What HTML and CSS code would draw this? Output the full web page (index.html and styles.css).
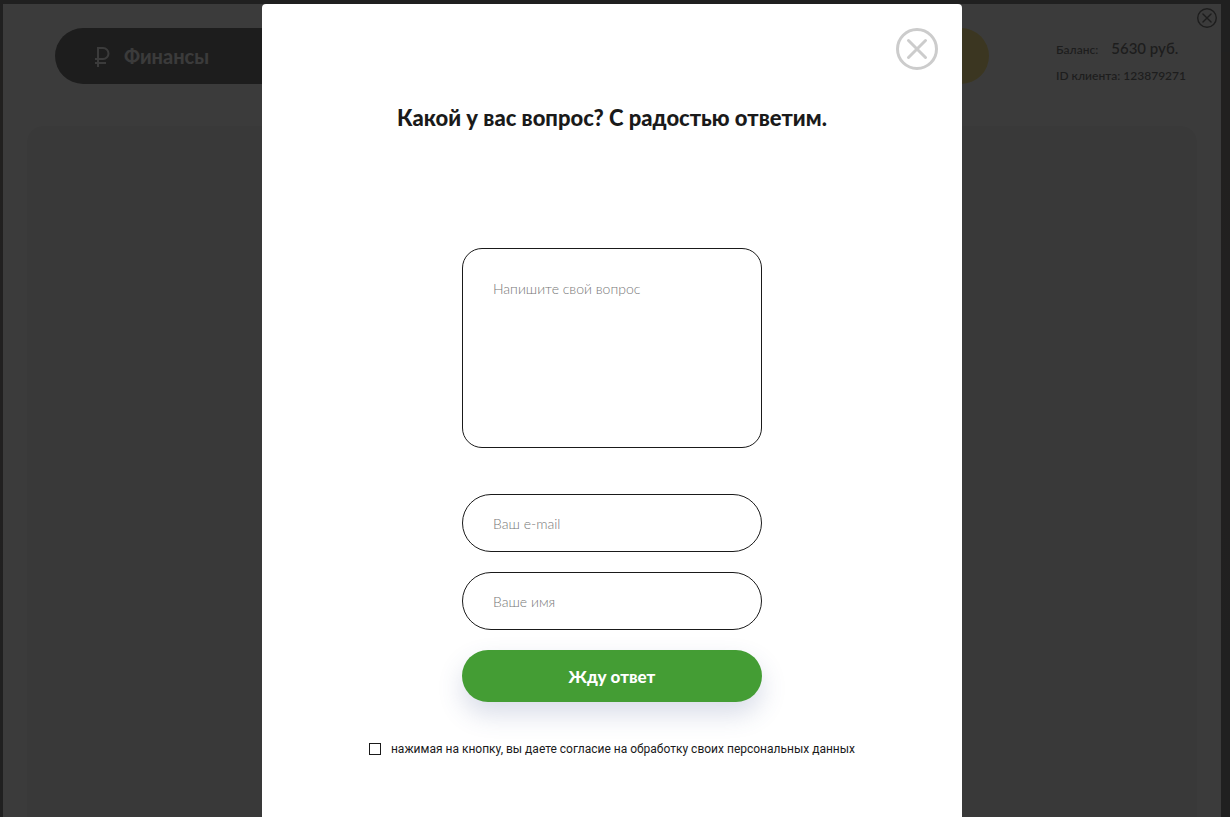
FILE: index.html
```html
<!DOCTYPE html>
<html lang="ru">

<head>
  <meta charset="UTF-8" />
  <meta name="viewport" content="width=device-width, initial-scale=1.0" />
  <title>Финансы</title>
  <link rel="stylesheet" href="styles.css">
</head>

<body>
  <div class="cabinet">
    <header class="header">
      <nav class="menu">
        <a href="#" class="menu-item">
          <svg class="rub" viewBox="0 0 16 22" aria-hidden="true">
            <path d="M4 22V3h5a5 5 0 0 1 0 11H1M1 18H12" />
          </svg>
          Финансы
        </a>
        <a href="#" class="menu-item menu-item-yellow" aria-label="Пополнить"></a>
      </nav>
      <div class="client">
        <p>Баланс: <span class="sum">5630 руб.</span></p>
        <p>ID клиента: 123879271</p>
      </div>
      <button type="button" class="close close-small" aria-label="Закрыть кабинет">
        <svg viewBox="0 0 42 42">
          <circle cx="21" cy="21" r="19.5" />
          <path d="M12.5 12.5l17 17M29.5 12.5l-17 17" />
        </svg>
      </button>
    </header>
    <main class="panel"></main>
  </div>

  <div class="overlay">
    <div class="modal" role="dialog" aria-labelledby="modalTitle">
      <button type="button" class="close close-modal" aria-label="Закрыть">
        <svg viewBox="0 0 42 42">
          <circle cx="21" cy="21" r="19.5" />
          <path d="M12.5 12.5l17 17M29.5 12.5l-17 17" />
        </svg>
      </button>
      <h2 id="modalTitle">Какой у вас вопрос? С радостью ответим.</h2>
      <form class="question-form">
        <textarea class="field field-question" placeholder="Напишите свой вопрос" aria-label="Напишите свой вопрос"></textarea>
        <input class="field" type="email" placeholder="Ваш e-mail" aria-label="Ваш e-mail" />
        <input class="field" type="text" placeholder="Ваше имя" aria-label="Ваше имя" />
        <button type="submit" class="submit">Жду ответ</button>
        <div class="agree">
          <input type="checkbox" id="agree" />
          <label for="agree">нажимая на кнопку, вы даете согласие на обработку своих персональных данных</label>
        </div>
      </form>
    </div>
  </div>
</body>

</html>
```

FILE: styles.css
```css
* {
  box-sizing: border-box;
}

body {
  margin: 0;
  padding: 4px 9px 0 3px;
  height: 100vh;
  overflow: hidden;
  display: flex;
  background: linear-gradient(#2e2e30 52px, #38332c 52px, #333 100%);
  font-family: Lato, "Open Sans", sans-serif;
  color: #1a1a1a;
}

button {
  border: 0;
  padding: 0;
  cursor: pointer;
}

.cabinet {
  position: relative;
  flex: 1;
  display: flex;
  flex-direction: column;
  padding: 24px 24px 0;
  background: #fff;
}

.header {
  display: flex;
  justify-content: space-between;
  padding: 0 11px 0 28px;
}

.menu {
  display: flex;
  justify-content: space-between;
  width: 934px;
}

.menu-item {
  display: flex;
  align-items: center;
  gap: 14px;
  width: 280px;
  height: 56px;
  padding-left: 39px;
  border-radius: 28px;
  background: #1a1a1a;
  color: #fff;
  font-size: 20px;
  font-weight: 700;
  text-decoration: none;
}

.menu-item-yellow {
  background: #fdd835;
}

.rub {
  width: 16px;
  height: 22px;
  fill: none;
  stroke: #fff;
  stroke-width: 2;
}

.client {
  padding-top: 10px;
  font-size: 12px;
  font-weight: 600;
}

.client p {
  margin: 0 0 6px;
  line-height: 20px;
}

.client p:last-child {
  margin-bottom: 0;
}

.sum {
  margin-left: 10px;
  font-size: 15px;
}

.close {
  position: absolute;
  background: none;
}

.close svg {
  display: block;
  width: 100%;
  fill: none;
  stroke: currentColor;
  stroke-width: 3;
  stroke-linecap: round;
}

.close-small {
  top: 4px;
  right: 4px;
  width: 20px;
  color: #1a1a1a;
}

.panel {
  flex: 1;
  margin-top: 40px;
  border-radius: 16px 16px 0 0;
  background: #eee;
}

.overlay {
  position: fixed;
  inset: 0;
  display: flex;
  justify-content: center;
  padding: 4px 6px 0 0;
  background: rgba(30, 30, 30, 0.87);
}

.modal {
  position: relative;
  width: 700px;
  padding: 100px 30px 0;
  border-radius: 4px 4px 0 0;
  background: #fff;
}

.close-modal {
  top: 24px;
  right: 24px;
  width: 42px;
  color: #ccc;
}

.modal h2 {
  margin: 0 0 116px;
  font-size: 22px;
  font-weight: 900;
  line-height: 28px;
  text-align: center;
}

.question-form {
  display: flex;
  flex-direction: column;
  align-items: center;
}

.field {
  width: 300px;
  height: 58px;
  margin: 0 0 20px;
  padding: 0 30px;
  border: 1px solid #1a1a1a;
  border-radius: 29px;
  background: #fff;
  font-family: inherit;
  font-size: 14px;
  font-weight: 300;
}

.field::placeholder {
  color: #777;
}

.field-question {
  height: 200px;
  margin-bottom: 46px;
  padding: 30px;
  border-radius: 20px;
  line-height: 20px;
  resize: none;
}

.submit {
  width: 300px;
  height: 52px;
  border-radius: 26px;
  background: #449d34;
  box-shadow: 0 12px 26px rgba(60, 80, 140, 0.2);
  color: #fff;
  font-family: inherit;
  font-size: 17px;
  font-weight: 900;
}

.agree {
  display: flex;
  align-items: center;
  gap: 10px;
  margin-top: 38px;
  font-family: Roboto, sans-serif;
  font-size: 12px;
  line-height: 18px;
}

.agree input {
  appearance: none;
  width: 12px;
  height: 12px;
  margin: 0;
  border: 1px solid #1a1a1a;
}

.agree input:checked {
  background: #449d34;
}
```
